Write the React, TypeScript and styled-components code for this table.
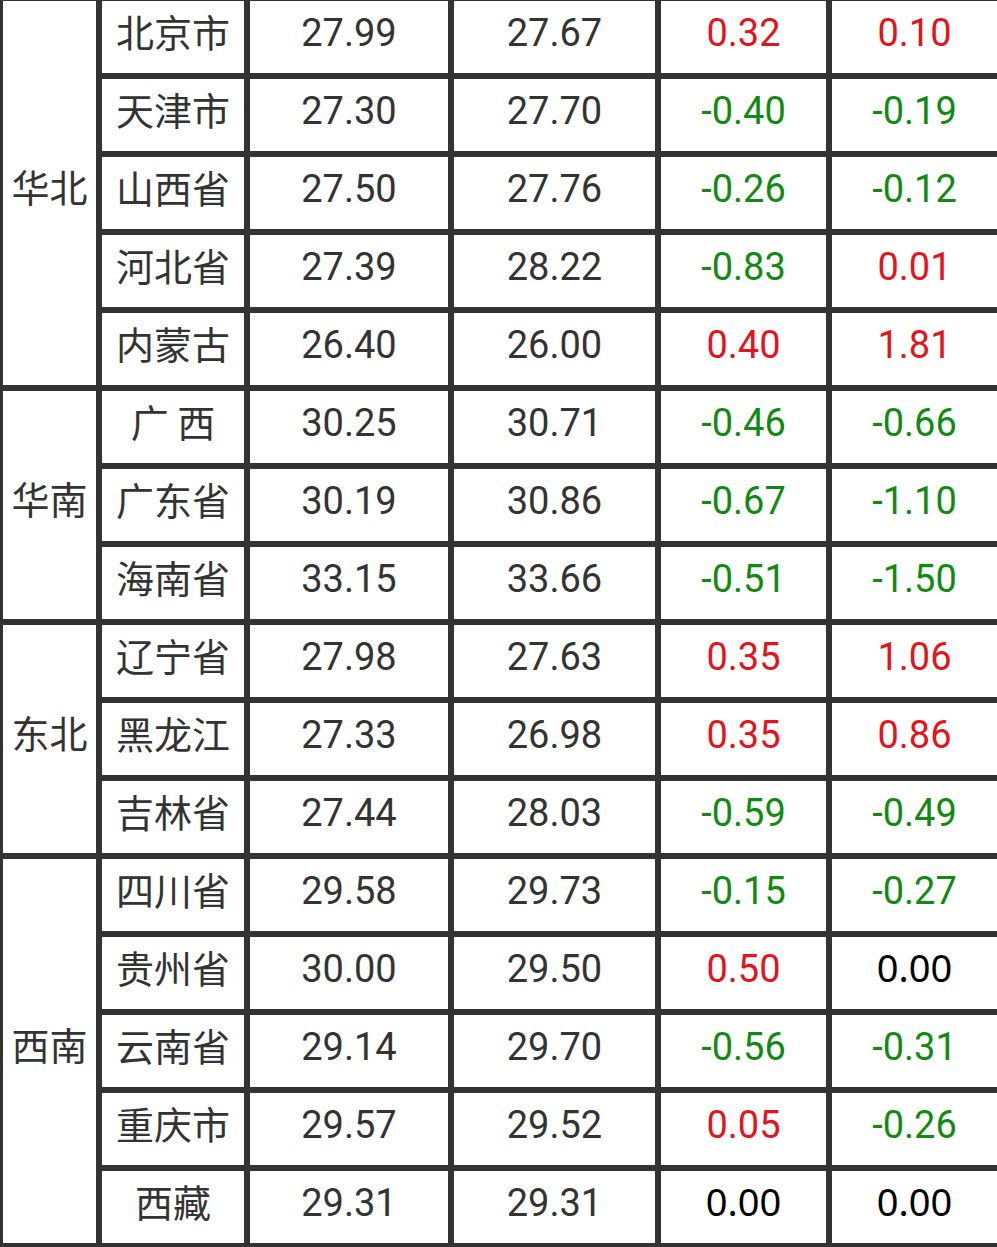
import React from "react";
import styled, { createGlobalStyle } from "styled-components";

const GlobalStyle = createGlobalStyle`
  html, body {
    margin: 0;
    padding: 0;
    background: #ffffff;
    overflow: hidden;
  }
  body {
    font-family: Roboto, "Noto Sans CJK SC", sans-serif;
  }
`;

const Sheet = styled.div`
  display: grid;
  grid-template-columns: 93px 142px 198px 201px 165px 165px;
  grid-auto-rows: 72px;
  gap: 6px;
  padding: 6px;
  width: max-content;
  margin: -5px 0 0 -3px;
  background: #333333;
`;

const Cell = styled.div`
  background: #ffffff;
  display: flex;
  align-items: center;
  justify-content: center;
  padding-bottom: 9px;
  box-sizing: border-box;
  font-size: 38px;
  line-height: 1;
  white-space: pre;
`;

const RegionCell = styled(Cell)<{ $span: number }>`
  grid-column: 1;
  grid-row: span ${(p) => p.$span};
  color: #333333;
  font-family: "Noto Sans CJK SC", sans-serif;
  padding-bottom: 14px;
`;

const ProvinceCell = styled(Cell)`
  color: #333333;
  font-family: "Noto Sans CJK SC", sans-serif;
  padding-bottom: 12px;
`;

const PriceCell = styled(Cell)`
  color: #333333;
  font-family: Roboto, sans-serif;
`;

type Tone = "up" | "down" | "flat";

const toneColor: Record<Tone, string> = {
  up: "#e3141c",
  down: "#118a11",
  flat: "#000000",
};

const ChangeCell = styled(Cell)<{ $tone: Tone }>`
  color: ${(p) => toneColor[p.$tone]};
  font-family: ${(p) => (p.$tone === "flat" ? '"Noto Sans", sans-serif' : "Roboto, sans-serif")};
  padding-bottom: ${(p) => (p.$tone === "flat" ? "13px" : "9px")};
`;

type Row = [string, string, string, string, string];

const groups: { region: string; rows: Row[] }[] = [
  {
    region: "华北",
    rows: [
      ["北京市", "27.99", "27.67", "0.32", "0.10"],
      ["天津市", "27.30", "27.70", "-0.40", "-0.19"],
      ["山西省", "27.50", "27.76", "-0.26", "-0.12"],
      ["河北省", "27.39", "28.22", "-0.83", "0.01"],
      ["内蒙古", "26.40", "26.00", "0.40", "1.81"],
    ],
  },
  {
    region: "华南",
    rows: [
      ["广 西", "30.25", "30.71", "-0.46", "-0.66"],
      ["广东省", "30.19", "30.86", "-0.67", "-1.10"],
      ["海南省", "33.15", "33.66", "-0.51", "-1.50"],
    ],
  },
  {
    region: "东北",
    rows: [
      ["辽宁省", "27.98", "27.63", "0.35", "1.06"],
      ["黑龙江", "27.33", "26.98", "0.35", "0.86"],
      ["吉林省", "27.44", "28.03", "-0.59", "-0.49"],
    ],
  },
  {
    region: "西南",
    rows: [
      ["四川省", "29.58", "29.73", "-0.15", "-0.27"],
      ["贵州省", "30.00", "29.50", "0.50", "0.00"],
      ["云南省", "29.14", "29.70", "-0.56", "-0.31"],
      ["重庆市", "29.57", "29.52", "0.05", "-0.26"],
      ["西藏", "29.31", "29.31", "0.00", "0.00"],
    ],
  },
];

const toneOf = (v: string): Tone => {
  const n = parseFloat(v);
  if (n > 0) return "up";
  if (n < 0) return "down";
  return "flat";
};

export default function App() {
  return (
    <>
      <GlobalStyle />
      <Sheet>
        {groups.map((g) => (
          <React.Fragment key={g.region}>
            <RegionCell $span={g.rows.length}>{g.region}</RegionCell>
            {g.rows.map((r) => (
              <React.Fragment key={r[0]}>
                <ProvinceCell>{r[0]}</ProvinceCell>
                <PriceCell>{r[1]}</PriceCell>
                <PriceCell>{r[2]}</PriceCell>
                <ChangeCell $tone={toneOf(r[3])}>{r[3]}</ChangeCell>
                <ChangeCell $tone={toneOf(r[4])}>{r[4]}</ChangeCell>
              </React.Fragment>
            ))}
          </React.Fragment>
        ))}
      </Sheet>
    </>
  );
}
